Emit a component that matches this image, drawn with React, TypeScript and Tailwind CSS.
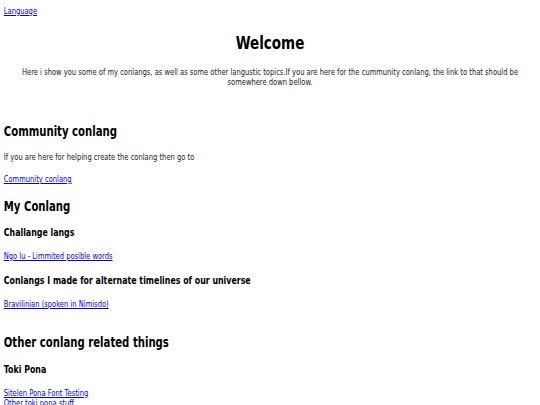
const linkCls = "block w-fit text-[9px] leading-[10.5px] text-[#0000ee] underline";
const h2Cls = "text-[13.5px] font-bold leading-[16px] text-black";
const h3Cls = "text-[10.5px] font-bold leading-[12px] text-black";

export default function App() {
  return (
    <div className="h-[405px] w-[540px] overflow-hidden bg-white">
      {/* page text is horizontally squeezed in the shot, so lay out at 720 wide and scale x */}
      <div className="w-[720px] origin-top-left scale-x-75 px-[5px] font-['DejaVu_Sans',sans-serif] text-[#222]">
        <a href="#" className={`mt-[5.75px] ${linkCls}`}>
          Language
        </a>

        <h1 className="mt-[15.25px] text-center text-[18px] font-bold leading-[21px] text-black">Welcome</h1>
        <p className="mt-[14.25px] text-center text-[9px] leading-[10.5px]">
          Here i show you some of my conlangs, as well as some other langustic topics.If you are here for the
          cummunity conlang, the link to that should be somewhere down bellow.
        </p>

        <h2 className={`mt-[35.25px] ${h2Cls}`}>Community conlang</h2>
        <p className="mt-[12.75px] text-[9px] leading-[10.5px]">
          If you are here for helping create the conlang then go to
        </p>
        <a href="#" className={`mt-[11.5px] ${linkCls}`}>Community conlang</a>

        <h2 className={`mt-[13.75px] ${h2Cls}`}>My Conlang</h2>
        <h3 className={`mt-[12px] ${h3Cls}`}>Challange langs</h3>
        <a href="#" className={`mt-[12.75px] ${linkCls}`}>Ngo lu - Limmited posible words</a>
        <h3 className={`mt-[12.75px] ${h3Cls}`}>Conlangs I made for alternate timelines of our universe</h3>
        <a href="#" className={`mt-[12.75px] ${linkCls}`}>Bravilinian (spoken in Nimisdo)</a>

        <h2 className={`mt-[24.75px] ${h2Cls}`}>Other conlang related things</h2>
        <h3 className={`mt-[13px] ${h3Cls}`}>Toki Pona</h3>
        <a href="#" className={`mt-[12.75px] ${linkCls}`}>Sitelen Pona Font Testing</a>
        <a href="#" className={linkCls}>Other toki pona stuff</a>
      </div>
    </div>
  );
}
